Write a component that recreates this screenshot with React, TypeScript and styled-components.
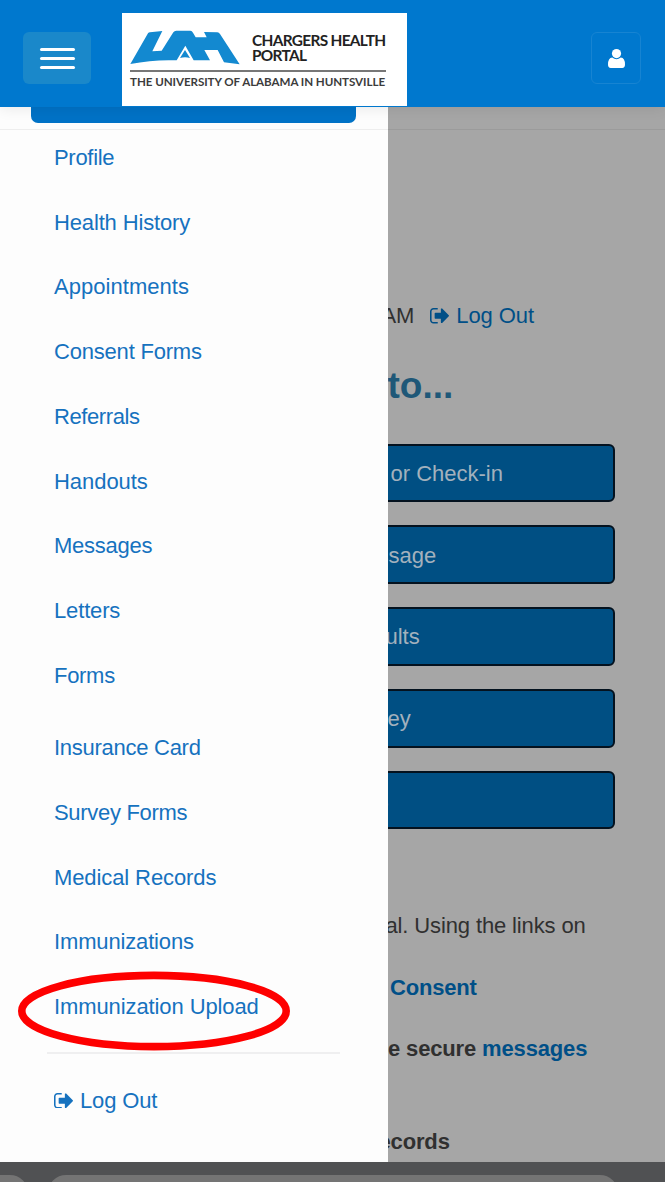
import React from "react";
import styled, { createGlobalStyle } from "styled-components";

const GlobalStyle = createGlobalStyle`
  * { box-sizing: border-box; }
  body { margin: 0; font-family: "Liberation Sans", Arial, sans-serif; }
`;

const Page = styled.div`
  width: 665px;
  height: 1182px;
  display: flex;
  flex-direction: column;
  overflow: hidden;
  background: #a6a6a6;
`;

const Header = styled.header`
  flex: 0 0 107px;
  display: flex;
  align-items: flex-start;
  background: #0078ce;
  position: relative;
  z-index: 2;
  box-shadow: 0 1px 14px rgba(0, 0, 0, 0.09);
`;

const MenuButton = styled.button`
  width: 68px;
  height: 52px;
  margin: 32px 31px 0 23px;
  padding: 0;
  border: 0;
  border-radius: 6px;
  background: #1a88ca;
  display: flex;
  flex-direction: column;
  align-items: center;
  justify-content: center;
  gap: 6px;
`;

const MenuBar = styled.span`
  width: 35px;
  height: 3px;
  border-radius: 1.5px;
  background: #fff;
`;

const LogoCard = styled.div`
  width: 285px;
  height: 92.5px;
  margin-top: 13px;
  padding: 16px 21px 0 8px;
  background: #fff;
  display: flex;
  flex-direction: column;
`;

const LogoTop = styled.div`
  height: 43px;
  display: flex;
  border-bottom: 2px solid #777;
`;

const LogoMark = styled.svg`
  width: 112px;
  height: 36px;
  flex: none;
`;

const LogoName = styled.div`
  margin: 4px 0 0 10px;
  font: 700 15.4px/15px Lato, sans-serif;
  letter-spacing: -0.68px;
  color: #222;
  white-space: nowrap;
`;

const LogoSub = styled.div`
  margin-top: 2px;
  font: 700 11.6px/16px Lato, sans-serif;
  letter-spacing: -0.06px;
  color: #3c3c3c;
  white-space: nowrap;
`;

const UserButton = styled.button`
  width: 50px;
  height: 52px;
  margin: 32px 24px 0 auto;
  padding: 0;
  border: 1.5px solid #1784d2;
  border-radius: 6px;
  background: transparent;
  color: #fff;
  display: flex;
  align-items: center;
  justify-content: center;
`;

const Body = styled.div`
  flex: 1;
  min-height: 0;
  display: grid;
  grid-template-columns: 387.5px 1fr;
`;

const Drawer = styled.nav`
  background: #fdfdfd;
  overflow: hidden;
`;

const DrawerTop = styled.div`
  height: 23px;
  padding: 0 32px 0 31px;
  border-bottom: 1px solid #eee;
`;

const ActiveStrip = styled.div`
  height: 15.5px;
  border-radius: 0 0 7px 7px;
  background: #0072c6;
`;

const MenuList = styled.ul`
  list-style: none;
  margin: 0;
  padding: 0 0 0 54px;
`;

const MenuItem = styled.li<{ $gap?: number; $track?: number }>`
  height: 64.75px;
  margin-top: ${(p) => p.$gap ?? 0}px;
  display: flex;
  align-items: center;
  font-size: 22px;
  letter-spacing: ${(p) => p.$track ?? 0}px;
  color: #1672bf;
  white-space: nowrap;
`;

const Highlight = styled.span`
  position: relative;
`;

const Ring = styled.svg`
  position: absolute;
  left: -36px;
  top: -23.5px;
  width: 272px;
  height: 80px;
  overflow: visible;
`;

const Divider = styled.hr`
  width: 293px;
  height: 2px;
  margin: 12px 0 0 47px;
  border: 0;
  background: #efeff0;
`;

const LogoutItem = styled.div`
  margin: 34px 0 0 54px;
  height: 26px;
  display: flex;
  align-items: center;
  gap: 7px;
  font-size: 22px;
  letter-spacing: -0.15px;
  color: #1672bf;
`;

const Main = styled.main`
  overflow: hidden;
  display: flex;
  flex-direction: column;
  background: #a6a6a6;
`;

const MainTop = styled.div`
  flex: 0 0 23px;
  border-bottom: 1.5px solid #9b9b9b;
`;

const Line = styled.div<{ $top: number; $shift?: number; $bold?: boolean; $track?: number }>`
  flex: none;
  height: 26px;
  line-height: 26px;
  margin: ${(p) => p.$top}px 0 0 ${(p) => p.$shift ?? 0}px;
  display: flex;
  align-items: center;
  white-space: pre;
  font-size: 22px;
  font-weight: ${(p) => (p.$bold ? 700 : 400)};
  letter-spacing: ${(p) => p.$track ?? 0}px;
  color: #303030;
`;

const Link = styled.a`
  color: #004f87;
`;

const LogoutLink = styled(Link)`
  display: flex;
  align-items: center;
  gap: 7px;
  margin-left: 16px;
`;

const Heading = styled.h2`
  flex: none;
  margin: 35px 0 0 0;
  font-size: 37px;
  line-height: 44px;
  font-weight: 700;
  color: #1f5878;
`;

const Actions = styled.div`
  flex: none;
  margin: 35.5px 50px 0 -20px;
  display: flex;
  flex-direction: column;
  gap: 23.1px;
`;

const Action = styled.button<{ $start: number }>`
  height: 58.7px;
  padding: 2px 0 0 ${(p) => p.$start + 18}px;
  border: 2px solid #04121f;
  border-radius: 6px;
  background: #004f83;
  color: #a3b1bd;
  font: 400 22px "Liberation Sans", Arial, sans-serif;
  text-align: left;
`;

const BottomBar = styled.footer`
  flex: 0 0 20px;
  display: flex;
  gap: 20px;
  padding-top: 13px;
  background: #505153;
  overflow: hidden;
`;

const Pill = styled.div<{ $w: number; $first?: boolean }>`
  flex: none;
  width: ${(p) => p.$w}px;
  height: 40px;
  border-radius: ${(p) => (p.$first ? "0 18px 0 0" : "18px")};
  background: #747474;
`;

const SignOut = () => (
  <svg width="19" height="15.5" viewBox="0 256 1568 1280" preserveAspectRatio="none" fill="currentColor">
    <path d="M640 1440q0 4 1 20t.5 26.5-3 23.5-10 19.5-20.5 6.5h-320q-119 0-203.5-84.5t-84.5-203.5v-704q0-119 84.5-203.5t203.5-84.5h320q13 0 22.5 9.5t9.5 22.5q0 4 1 20t.5 26.5-3 23.5-10 19.5-20.5 6.5h-320q-66 0-113 47t-47 113v704q0 66 47 113t113 47h312l11.5 1 11.5 3 8 5.5 7 9 2 13.5zm928-544q0 26-19 45l-544 544q-19 19-45 19t-45-19-19-45v-288h-448q-26 0-45-19t-19-45v-384q0-26 19-45t45-19h448v-288q0-26 19-45t45-19 45 19l544 544q19 19 19 45z" />
  </svg>
);

const User = () => (
  <svg width="17" height="19" viewBox="0 0 17 19" fill="currentColor">
    <circle cx="8.5" cy="4.6" r="4.6" />
    <path d="M4.2 8.4Q8.5 12 12.8 8.4Q17 8.6 17 15.6Q17 19 14.2 19H2.8Q0 19 0 15.6Q0 8.6 4.2 8.4Z" />
  </svg>
);

const items: { label: string; gap?: number; track?: number }[] = [
  { label: "Profile", gap: -4.5, track: -0.3 },
  { label: "Health History", track: -0.15 },
  { label: "Appointments", track: 0.04 },
  { label: "Consent Forms", track: -0.2 },
  { label: "Referrals", track: -0.4 },
  { label: "Handouts", track: -0.05 },
  { label: "Messages", track: -0.25 },
  { label: "Letters", track: -0.15 },
  { label: "Forms", track: -0.3 },
  { label: "Insurance Card", gap: 7.5, track: -0.27 },
  { label: "Survey Forms", track: -0.3 },
  { label: "Medical Records", track: -0.1 },
  { label: "Immunizations", track: -0.15 },
];

export default function App() {
  return (
    <Page>
      <GlobalStyle />
      <Header>
        <MenuButton aria-label="Menu">
          <MenuBar />
          <MenuBar />
          <MenuBar />
        </MenuButton>
        <LogoCard>
          <LogoTop>
            <LogoMark viewBox="24 27 336 108" fill="#1389d0">
              <path d="M25 132L78 40Q80 37 84 37L121 33L91 94L119 92L154 37Q157 32 163 32H205Q210 32 213 38L221 52H254L246 36L286 37Q291 37 294 42L353 133L306 127L287 90H247L264 121H215L190 77L164 121Q95 118 25 132Z" />
              <path d="M189 90L204 114Q189 110 174 114Z" />
            </LogoMark>
            <LogoName>
              CHARGERS HEALTH
              <br />
              PORTAL
            </LogoName>
          </LogoTop>
          <LogoSub>THE UNIVERSITY OF ALABAMA IN HUNTSVILLE</LogoSub>
        </LogoCard>
        <UserButton aria-label="Account">
          <User />
        </UserButton>
      </Header>
      <Body>
        <Drawer>
          <DrawerTop>
            <ActiveStrip />
          </DrawerTop>
          <MenuList>
            {items.map((it) => (
              <MenuItem key={it.label} $gap={it.gap} $track={it.track}>
                {it.label}
              </MenuItem>
            ))}
            <MenuItem $track={-0.1}>
              <Highlight>
                Immunization Upload
                <Ring viewBox="0 0 272 80">
                  <ellipse cx="136" cy="40" rx="132.2" ry="35.6" fill="none" stroke="#fe0000" strokeWidth="7.6" />
                </Ring>
              </Highlight>
            </MenuItem>
          </MenuList>
          <Divider />
          <LogoutItem>
            <SignOut />
            Log Out
          </LogoutItem>
        </Drawer>
        <Main>
          <MainTop />
          <Line $top={173} $shift={-6} $track={-0.1}>
            AM
            <LogoutLink>
              <SignOut />
              Log Out
            </LogoutLink>
          </Line>
          <Heading>to...</Heading>
          <Actions>
            <Action $start={3}>or Check-in</Action>
            <Action $start={-10}>ssage</Action>
            <Action $start={-2}>ults</Action>
            <Action $start={-11}>vey</Action>
            <Action $start={-10}>s</Action>
          </Actions>
          <Line $top={84} $shift={-2} $track={-0.13}>al. Using the links on</Line>
          <Line $top={36} $shift={2.5} $bold $track={-0.2}>
            <Link>Consent</Link>
          </Line>
          <Line $top={35} $shift={0.5} $bold $track={-0.15}>
            e secure <Link>messages</Link>
          </Line>
          <Line $top={67} $shift={-9} $bold $track={-0.15}>ecords</Line>
        </Main>
      </Body>
      <BottomBar>
        <Pill $w={28} $first />
        <Pill $w={570} />
      </BottomBar>
    </Page>
  );
}
